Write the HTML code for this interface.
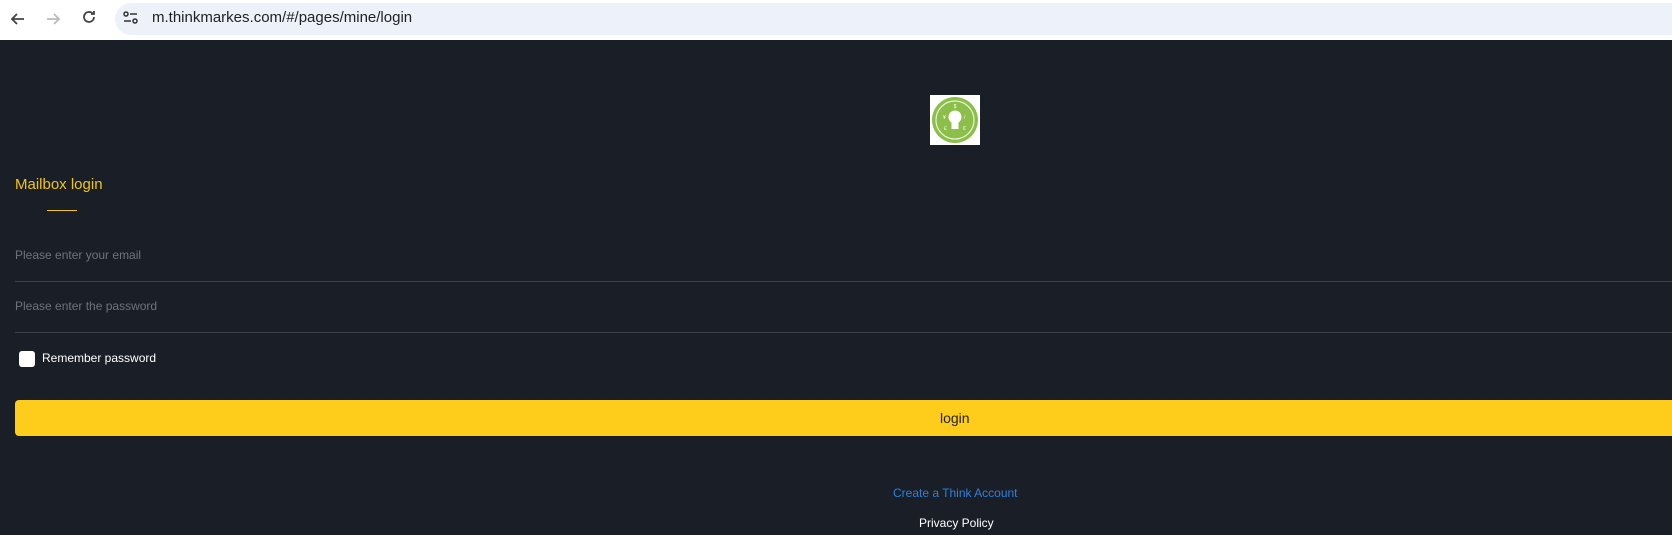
<!DOCTYPE html>
<html><head><meta charset="utf-8"><style>
*{margin:0;padding:0;box-sizing:border-box}
body{width:1672px;height:535px;overflow:hidden;background:#1a1f27;font-family:"Liberation Sans",sans-serif;position:relative}
.bar{position:absolute;left:0;top:0;width:1672px;height:40px;background:#fff}
.pill{position:absolute;left:115px;top:3px;width:1580px;height:32px;border-radius:16px;background:#edf1f9}
.url{position:absolute;left:152px;top:9px;font-size:15px;color:#222}
.t{position:absolute;white-space:nowrap}
.line{position:absolute;left:15px;right:0;height:1px;background:#3a404a}
</style></head><body>
<div class="bar">
<svg style="position:absolute;left:8px;top:9px" width="20" height="20" viewBox="0 0 20 20"><path d="M16 10H4M9 5L4 10l5 5" stroke="#444" stroke-width="1.8" fill="none"/></svg>
<svg style="position:absolute;left:43px;top:9px" width="20" height="20" viewBox="0 0 20 20"><path d="M4 10h12M11 5l5 5-5 5" stroke="#bbb" stroke-width="1.8" fill="none"/></svg>
<svg style="position:absolute;left:79px;top:7px" width="20" height="20" viewBox="0 0 20 20"><path d="M15 10a5 5 0 1 1-1.5-3.6M15 4v3h-3" stroke="#444" stroke-width="1.8" fill="none"/></svg>
<div class="pill"></div>
<svg style="position:absolute;left:121px;top:8px" width="20" height="20" viewBox="0 0 20 20"><circle cx="5" cy="6" r="2" fill="none" stroke="#333" stroke-width="1.5"/><path d="M9 6h7M3 13h7" stroke="#333" stroke-width="1.5"/><circle cx="14" cy="13" r="2" fill="none" stroke="#333" stroke-width="1.5"/></svg>
<div class="url">m.thinkmarkes.com/#/pages/mine/login</div>
</div>
<svg style="position:absolute;left:930px;top:95px" width="50" height="50" viewBox="0 0 50 50"><rect width="50" height="50" fill="#fff"/><circle cx="25" cy="25" r="23" fill="#8cbf4a"/><circle cx="25" cy="25" r="19" fill="none" stroke="#e8f3d8" stroke-width="1.2"/><circle cx="25" cy="22" r="6.5" fill="#fff"/><rect x="21.5" y="27" width="7" height="7" fill="#fff"/><text x="25" y="13" font-size="5" fill="#fff" text-anchor="middle">$</text><text x="13" y="24" font-size="5" fill="#fff">¥</text><text x="34" y="24" font-size="5" fill="#fff">/</text><text x="14" y="35" font-size="5" fill="#fff">£</text><text x="33" y="35" font-size="5" fill="#fff">€</text></svg>
<div class="t" style="left:15px;top:176px;font-size:15px;color:#f0c419">Mailbox login</div>
<div style="position:absolute;left:47px;top:210px;width:30px;height:1px;background:#f0c419"></div>
<div class="t" style="left:15px;top:248px;font-size:12px;color:#6d737c">Please enter your email</div>
<div class="line" style="top:281px"></div>
<div class="t" style="left:15px;top:299px;font-size:12px;color:#6d737c">Please enter the password</div>
<div class="line" style="top:332px"></div>
<div style="position:absolute;left:19px;top:351px;width:16px;height:16px;background:#fff;border-radius:3px"></div>
<div class="t" style="left:42px;top:351px;font-size:12px;color:#fff">Remember password</div>
<div style="position:absolute;left:15px;top:400px;width:1657px;height:36px;background:#fecd1c;border-radius:4px 0 0 4px"></div>
<div class="t" style="left:940px;top:410px;font-size:14px;color:#222">login</div>
<div class="t" style="left:893px;top:486px;font-size:12px;color:#2e7fd9">Create a Think Account</div>
<div class="t" style="left:919px;top:516px;font-size:12px;color:#fff">Privacy Policy</div>
</body></html>
